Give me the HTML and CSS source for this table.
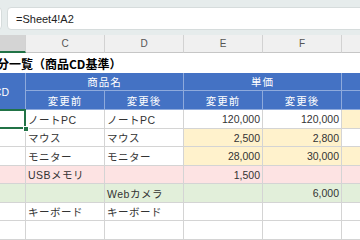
FILE: index.html
```html
<!DOCTYPE html>
<html lang="ja">
<head>
<meta charset="utf-8">
<title>差分一覧</title>
<link rel="stylesheet" href="styles.css">
</head>
<body>
<div class="app">
  <div class="fbar">
    <div class="namebox"></div>
    <div class="formula">=Sheet4!A2</div>
  </div>
  <div class="sheet">
    <div class="ch sel"></div>
    <div class="ch">C</div>
    <div class="ch">D</div>
    <div class="ch">E</div>
    <div class="ch">F</div>
    <div class="ch"></div>

    <div class="title">差分一覧（商品CD基準）</div>

    <div class="hd hd-key">商品CD</div>
    <div class="hd span2">商品名</div>
    <div class="hd span2">単価</div>
    <div class="hd"></div>
    <div class="hd">変更前</div>
    <div class="hd">変更後</div>
    <div class="hd">変更前</div>
    <div class="hd">変更後</div>
    <div class="hd"></div>

    <div class="c active"></div>
    <div class="c">ノートPC</div>
    <div class="c">ノートPC</div>
    <div class="c num">120,000</div>
    <div class="c num">120,000</div>
    <div class="c y"></div>

    <div class="c"></div>
    <div class="c">マウス</div>
    <div class="c">マウス</div>
    <div class="c num y">2,500</div>
    <div class="c num y">2,800</div>
    <div class="c"></div>

    <div class="c"></div>
    <div class="c">モニター</div>
    <div class="c">モニター</div>
    <div class="c num y">28,000</div>
    <div class="c num y">30,000</div>
    <div class="c y"></div>

    <div class="c p"></div>
    <div class="c p">USBメモリ</div>
    <div class="c p"></div>
    <div class="c num p">1,500</div>
    <div class="c num p"></div>
    <div class="c p"></div>

    <div class="c g"></div>
    <div class="c g"></div>
    <div class="c g">Webカメラ</div>
    <div class="c num g"></div>
    <div class="c num g">6,000</div>
    <div class="c g"></div>

    <div class="c"></div>
    <div class="c">キーボード</div>
    <div class="c">キーボード</div>
    <div class="c num"></div>
    <div class="c num"></div>
    <div class="c"></div>

    <div class="c"></div>
    <div class="c"></div>
    <div class="c"></div>
    <div class="c"></div>
    <div class="c"></div>
    <div class="c"></div>
  </div>
</div>
</body>
</html>
```
FILE: styles.css
```css
html, body {
  margin: 0;
  padding: 0;
  background: #ffffff;
  overflow: hidden;
}
body {
  width: 360px;
  height: 240px;
  font-family: "Liberation Sans", "Noto Sans CJK JP", sans-serif;
}
.app {
  width: 360px;
  height: 240px;
  overflow: hidden;
}
.fbar {
  display: flex;
  gap: 5px;
  margin-left: -60px;
  height: 35px;
  box-sizing: border-box;
  padding: 7px 0 5px 0;
  background: #e6ecec;
}
.namebox {
  width: 62px;
  flex: none;
  background: #ffffff;
  border-radius: 4px;
  border: 1px solid #d6dcdc;
  box-sizing: border-box;
}
.formula {
  flex: 1;
  background: #ffffff;
  border: 1px solid #d6dcdc;
  border-radius: 4px;
  box-sizing: border-box;
  padding-left: 8px;
  font-size: 11px;
  color: #222222;
  display: flex;
  align-items: center;
  margin-right: -10px;
}
.sheet {
  display: grid;
  margin-left: -60px;
  grid-template-columns: 86px 79px 79px 79px 79px 60px;
  grid-template-rows: 18px 20px 18px 19px 19px 18px 19px 18px 19px 18px 19px;
  font-size: 10.5px;
  color: #333333;
}
.ch {
  background: #f0f0f0;
  border-right: 1px solid #d2d2d2;
  border-bottom: 1px solid #c6c6c6;
  box-sizing: border-box;
  display: flex;
  align-items: center;
  justify-content: center;
  font-size: 10px;
  color: #555555;
}
.ch.sel {
  background: #d4d4d4;
  border-bottom: 2px solid #217346;
}
.title {
  grid-column: 1 / span 6;
  padding-left: 45px;
  font-family: "Noto Sans CJK JP", sans-serif;
  font-weight: bold;
  font-size: 12px;
  color: #000000;
  display: flex;
  align-items: center;
  white-space: nowrap;
}
.hd {
  background: #4472c4;
  color: #ffffff;
  border-right: 1px solid #8eaadc;
  border-bottom: 1px solid #8eaadc;
  box-sizing: border-box;
  display: flex;
  align-items: center;
  justify-content: center;
  font-size: 10.5px;
  letter-spacing: 1px;
}
.hd.span2 {
  grid-column: span 2;
}
.hd.hd-key {
  grid-row: span 2;
  justify-content: flex-end;
  padding-right: 16px;
  letter-spacing: 0;
}
.c {
  border-right: 1px solid #d4d4d4;
  border-bottom: 1px solid #d4d4d4;
  box-sizing: border-box;
  display: flex;
  align-items: center;
  padding: 0 2px;
  white-space: nowrap;
  letter-spacing: 0.5px;
  background: #ffffff;
}
.c.num {
  justify-content: flex-end;
  letter-spacing: 0;
}
.c.y { background: #fff2cc; }
.c.p { background: #fde3e3; }
.c.g { background: #e2efda; }
.c.active {
  position: relative;
}
.c.active::after {
  content: "";
  position: absolute;
  top: -1px;
  left: 0;
  right: -1px;
  bottom: -1px;
  border: 2px solid #217346;
}
.c.active::before {
  content: "";
  position: absolute;
  right: -4px;
  bottom: -4px;
  width: 4px;
  height: 4px;
  background: #217346;
  border: 1px solid #ffffff;
  z-index: 2;
}
```
